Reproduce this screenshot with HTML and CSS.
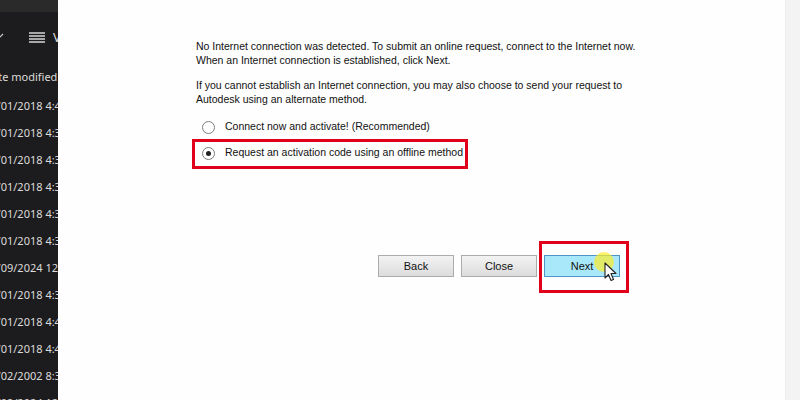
FILE: index.html
```html
<!DOCTYPE html>
<html>
<head>
<meta charset="utf-8">
<link rel="stylesheet" href="styles.css">
</head>
<body>
<div class="screen">
  <aside class="explorer">
    <div class="ex-top"></div>
    <div class="ex-toolbar">
      <svg class="chev" width="6" height="6" viewBox="0 0 6 6"><path d="M-3 1 L0 4 L3 1" fill="none" stroke="#cfcfcf" stroke-width="1.2"/></svg>
      <svg class="burger" width="16" height="11" viewBox="0 0 16 11"><path d="M0 1h16M0 4h16M0 7h16M0 10h16" stroke="#d6d6d6" stroke-width="1.3"/></svg>
      <span class="view">View</span>
    </div>
    <div class="ex-list">
      <div class="ex-row head">Date modified</div>
      <div class="ex-row">12/01/2018 4:45 PM</div>
      <div class="ex-row">12/01/2018 4:34 PM</div>
      <div class="ex-row">12/01/2018 4:34 PM</div>
      <div class="ex-row">12/01/2018 4:34 PM</div>
      <div class="ex-row">12/01/2018 4:34 PM</div>
      <div class="ex-row">12/01/2018 4:34 PM</div>
      <div class="ex-row">12/09/2024 12:40 PM</div>
      <div class="ex-row">12/01/2018 4:34 PM</div>
      <div class="ex-row">12/01/2018 4:43 PM</div>
      <div class="ex-row">12/01/2018 4:47 PM</div>
      <div class="ex-row">12/02/2002 8:35 AM</div>
      <div class="ex-row">12/09/2024 12:40 PM</div>
    </div>
  </aside>
  <main class="dialog">
    <div class="content">
      <p>No Internet connection was detected. To submit an online request, connect to the Internet now.<br>When an Internet connection is established, click Next.</p>
      <p>If you cannot establish an Internet connection, you may also choose to send your request to<br>Autodesk using an alternate method.</p>
      <div class="options">
        <div class="opt"><span class="radio"></span>Connect now and activate! (Recommended)</div>
        <div class="opt marked"><span class="radio checked"></span>Request an activation code using an offline method</div>
      </div>
      <div class="buttons">
        <button class="btn">Back</button>
        <button class="btn">Close</button>
        <button class="btn primary marked">Next
          <span class="cursor">
            <span class="glow"></span>
            <svg width="13" height="20" viewBox="0 0 13 20"><path d="M1 1 L1 16 L4.5 12.5 L7 18.5 L9.5 17.5 L7 11.5 L12 11.5 Z" fill="#fff" stroke="#222" stroke-width="1.1" stroke-linejoin="round"/></svg>
          </span>
        </button>
      </div>
    </div>
  </main>
  <div class="edge"></div>
</div>
</body>
</html>
```
FILE: styles.css
```css
html, body {
  margin: 0;
  padding: 0;
  background: #fefefe;
}
.screen {
  display: flex;
  width: 800px;
  height: 400px;
  overflow: hidden;
}
.explorer {
  width: 58px;
  flex: none;
  background: #1c1b1d;
  overflow: hidden;
  font-family: "Noto Sans", sans-serif;
  font-size: 11px;
  color: #dcdcdc;
}
.ex-top {
  height: 12px;
  background: #2a2a2b;
}
.ex-toolbar {
  height: 50px;
  display: flex;
  align-items: center;
  width: 120px;
}
.ex-toolbar > * {
  flex: none;
}
.ex-toolbar .chev {
  margin-top: -2px;
}
.ex-toolbar .burger {
  margin-left: 23px;
}
.ex-toolbar .view {
  margin-left: 8px;
  font-size: 13px;
  white-space: nowrap;
}
.ex-list {
  margin-left: -16px;
  width: 120px;
}
.ex-row {
  height: 27px;
  line-height: 27px;
  white-space: nowrap;
}
.ex-row.head {
  height: 30px;
  line-height: 30px;
}
.dialog {
  flex: 1;
  background: #fefefe;
  font-family: "Liberation Sans", Arial, sans-serif;
  font-size: 10.5px;
  line-height: 13.5px;
  color: #111;
}
.content {
  padding: 40px 0 0 138px;
  position: relative;
}
.content p {
  margin: 0;
  white-space: nowrap;
}
.content p + p {
  margin-top: 12px;
}
.options {
  margin-top: 8px;
}
.opt {
  position: relative;
  height: 26px;
  display: flex;
  align-items: center;
  padding-left: 6px;
  white-space: nowrap;
}
.radio {
  width: 11px;
  height: 11px;
  border: 1px solid #7d7d7d;
  border-radius: 50%;
  background: #fff;
  margin-right: 10px;
  display: flex;
  align-items: center;
  justify-content: center;
  flex: none;
}
.radio.checked::after {
  content: "";
  width: 5px;
  height: 5px;
  border-radius: 50%;
  background: #222;
}
.opt.marked::after {
  content: "";
  position: absolute;
  left: -4px;
  top: -1px;
  width: 270px;
  height: 24px;
  border: 3px solid #e0001b;
}
.buttons {
  margin-top: 89px;
  margin-left: 182px;
  display: flex;
  gap: 7px;
}
.btn {
  position: relative;
  width: 76px;
  height: 22px;
  border: 1px solid #acacac;
  background: linear-gradient(#f3f3f3, #dcdcdc);
  font-family: "Liberation Sans", Arial, sans-serif;
  font-size: 11px;
  color: #111;
  padding: 0;
}
.btn.primary {
  background: #a9e8fa;
  border-color: #4f94c8;
}
.btn.marked::after {
  content: "";
  position: absolute;
  left: -6px;
  top: -15px;
  width: 84px;
  height: 46px;
  border: 3px solid #e0001b;
}
.cursor {
  position: absolute;
  left: 59px;
  top: 6px;
  width: 13px;
  height: 20px;
}
.cursor .glow {
  position: absolute;
  left: -10px;
  top: -10px;
  width: 20px;
  height: 20px;
  border-radius: 50%;
  background: rgba(250, 236, 40, 0.7);
}
.cursor svg {
  position: absolute;
  left: 0;
  top: 0;
}
.edge {
  width: 15px;
  flex: none;
  background: #f3f3f3;
  border-left: 1px solid #ececec;
  box-sizing: border-box;
}
```
